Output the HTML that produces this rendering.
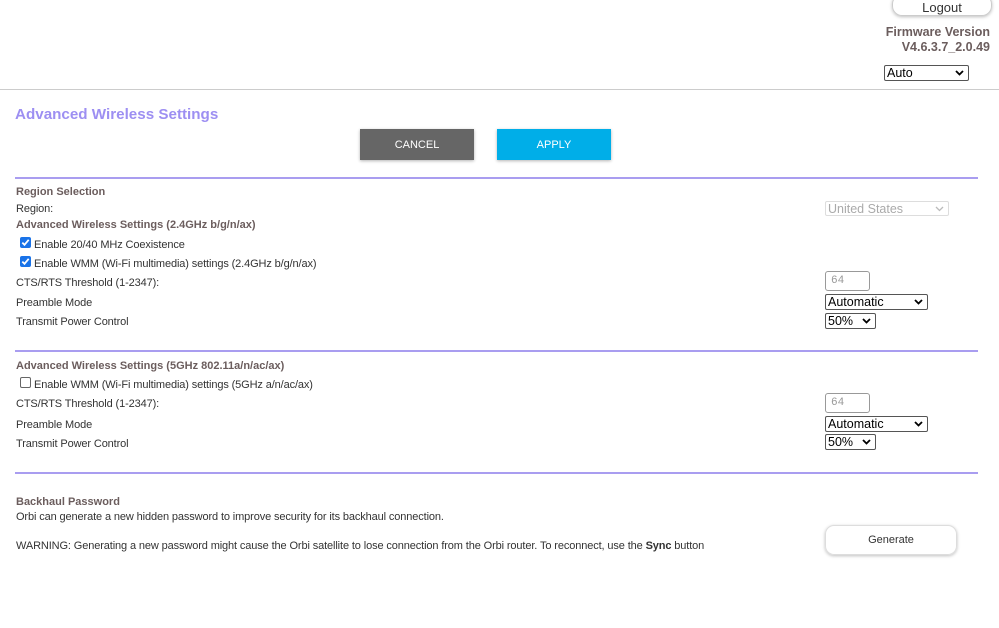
<!DOCTYPE html>
<html><head><meta charset="utf-8"><style>
body{margin:0;width:999px;height:628px;background:#fff;font-family:"Liberation Sans",sans-serif;font-size:11px;color:#333;position:relative;overflow:hidden}
.a{position:absolute;white-space:nowrap}
.t{letter-spacing:-0.12px}
.h{font-weight:bold;color:#6b5d5d}
.line{position:absolute;left:15px;width:963px;height:2px;background:#a99df0}
.sel{position:absolute;border:1px solid #555;border-radius:2px;background:#fff;height:15px;box-sizing:border-box;font-size:12.5px;color:#000;padding-left:2px;line-height:14px}
.sel svg{position:absolute;right:4px;top:4px}
.inp{position:absolute;border:1px solid #999;border-radius:3px;width:45px;height:20px;box-sizing:border-box;font-family:"Liberation Mono",monospace;font-size:11px;color:#999;padding:3px 0 0 5px}
.cb{position:absolute;width:11px;height:11px;border-radius:2px;box-sizing:border-box}
.btn{position:absolute;color:#fff;font-size:11px;text-align:center;box-shadow:0 1px 3px rgba(0,0,0,.3)}
</style></head><body>
<div class="a" style="left:892px;top:-6px;width:98px;height:20px;border:1px solid #ccc;border-radius:10px;box-shadow:0 1px 3px rgba(0,0,0,.25);text-align:center;font-size:13px;line-height:25px;color:#333">Logout</div>
<div class="a h" style="right:9px;top:25px;font-size:12.5px;text-align:right;line-height:15px">Firmware Version<br>V4.6.3.7_2.0.49</div>
<div class="sel" style="left:884px;top:65px;width:85px;height:16px">Auto<svg width="9" height="6" viewBox="0 0 9 6"><path d="M1 1l3.5 3.5L8 1" stroke="#000" stroke-width="1.8" fill="none"/></svg></div>
<div class="a" style="left:0;top:89px;width:999px;height:1px;background:#ccc"></div>
<div class="a" style="left:15px;top:106px;font-size:15.2px;font-weight:bold;color:#9d8ff2">Advanced Wireless Settings</div>
<div class="btn" style="left:360px;top:129px;width:114px;height:31px;line-height:33px;background:#666">CANCEL</div>
<div class="btn" style="left:497px;top:129px;width:114px;height:31px;line-height:33px;background:#00aee8">APPLY</div>
<div class="line" style="top:177px"></div>
<div class="a h" style="left:16px;top:186px">Region Selection</div>
<div class="a t" style="left:16px;top:203px">Region:</div>
<div class="sel" style="left:825px;top:201px;width:124px;border-color:#ddd;color:#aaa">United States<svg width="9" height="6" viewBox="0 0 9 6"><path d="M1 1l3.5 3.5L8 1" stroke="#bbb" stroke-width="1.3" fill="none"/></svg></div>
<div class="a h" style="left:16px;top:219px">Advanced Wireless Settings (2.4GHz b/g/n/ax)</div>
<div class="cb" style="left:20px;top:237px;background:#1a73e8"><svg width="11" height="11" viewBox="0 0 11 11" style="position:absolute;top:0;left:0"><path d="M2.3 5.6l2.2 2.2 4.2-5" stroke="#fff" stroke-width="1.8" fill="none"/></svg></div>
<div class="a t" style="left:34px;top:239px">Enable 20/40 MHz Coexistence</div>
<div class="cb" style="left:20px;top:256px;background:#1a73e8"><svg width="11" height="11" viewBox="0 0 11 11" style="position:absolute;top:0;left:0"><path d="M2.3 5.6l2.2 2.2 4.2-5" stroke="#fff" stroke-width="1.8" fill="none"/></svg></div>
<div class="a t" style="left:34px;top:258px">Enable WMM (Wi-Fi multimedia) settings (2.4GHz b/g/n/ax)</div>
<div class="a t" style="left:16px;top:277px">CTS/RTS Threshold (1-2347):</div>
<div class="inp" style="left:825px;top:271px">64</div>
<div class="a t" style="left:16px;top:297px">Preamble Mode</div>
<div class="sel" style="left:825px;top:294px;width:103px;height:16px">Automatic<svg width="9" height="6" viewBox="0 0 9 6"><path d="M1 1l3.5 3.5L8 1" stroke="#000" stroke-width="1.8" fill="none"/></svg></div>
<div class="a t" style="left:16px;top:316px">Transmit Power Control</div>
<div class="sel" style="left:825px;top:313px;width:51px;height:16px">50%<svg width="9" height="6" viewBox="0 0 9 6"><path d="M1 1l3.5 3.5L8 1" stroke="#000" stroke-width="1.8" fill="none"/></svg></div>
<div class="line" style="top:350px"></div>
<div class="a h" style="left:16px;top:360px">Advanced Wireless Settings (5GHz 802.11a/n/ac/ax)</div>
<div class="cb" style="left:20px;top:377px;border:1px solid #666"></div>
<div class="a t" style="left:34px;top:379px">Enable WMM (Wi-Fi multimedia) settings (5GHz a/n/ac/ax)</div>
<div class="a t" style="left:16px;top:398px">CTS/RTS Threshold (1-2347):</div>
<div class="inp" style="left:825px;top:393px">64</div>
<div class="a t" style="left:16px;top:419px">Preamble Mode</div>
<div class="sel" style="left:825px;top:416px;width:103px;height:16px">Automatic<svg width="9" height="6" viewBox="0 0 9 6"><path d="M1 1l3.5 3.5L8 1" stroke="#000" stroke-width="1.8" fill="none"/></svg></div>
<div class="a t" style="left:16px;top:438px">Transmit Power Control</div>
<div class="sel" style="left:825px;top:434px;width:51px;height:16px">50%<svg width="9" height="6" viewBox="0 0 9 6"><path d="M1 1l3.5 3.5L8 1" stroke="#000" stroke-width="1.8" fill="none"/></svg></div>
<div class="line" style="top:472px"></div>
<div class="a h" style="left:16px;top:496px">Backhaul Password</div>
<div class="a t" style="left:16px;top:511px">Orbi can generate a new hidden password to improve security for its backhaul connection.</div>
<div class="a t" style="left:16px;top:540px">WARNING: Generating a new password might cause the Orbi satellite to lose connection from the Orbi router. To reconnect, use the <b>Sync</b> button</div>
<div class="a" style="left:825px;top:525px;width:130px;height:28px;border:1px solid #ddd;border-radius:9px;box-shadow:0 1px 3px rgba(0,0,0,.25);text-align:center;line-height:29px;color:#333">Generate</div>
</body></html>
